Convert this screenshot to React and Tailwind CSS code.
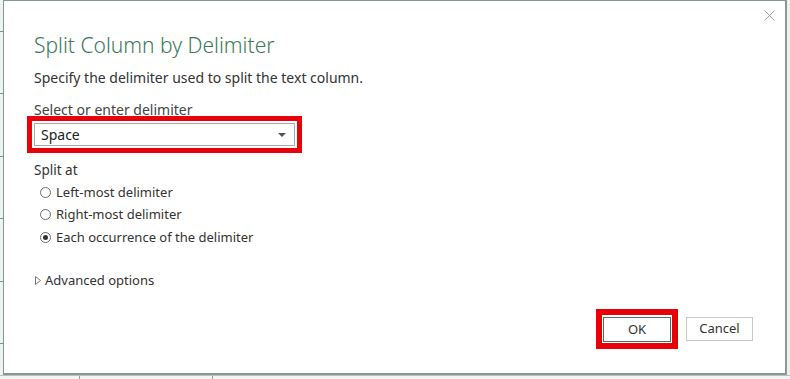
import { X } from 'lucide-react'

function Radio({ checked, label }) {
    return (
        <div className="flex items-center h-[22.5px]">
            <span className="w-[11px] h-[11px] rounded-full border border-[#6b6b6b] bg-white flex items-center justify-center">
                {checked && <span className="w-[5px] h-[5px] rounded-full bg-[#333]" />}
            </span>
            <span className="ml-[5px] text-[13px] text-[#333]">{label}</span>
        </div>
    )
}

export default function App() {
    return (
        <div className="w-[790px] h-[379px] bg-[#f6f8f7] overflow-hidden flex flex-col" style={{ fontFamily: '"Segoe UI", "Noto Sans", sans-serif' }}>
            <div className="flex h-[375px]">
                {/* sheet edge on the left */}
                <div className="w-[3px] flex flex-col justify-around bg-[#f0f3f1]">
                    <span className="h-px bg-[#6f9b85]" />
                    <span className="h-px bg-[#6f9b85]" />
                    <span className="h-px bg-[#6f9b85]" />
                    <span className="h-px bg-[#6f9b85]" />
                    <span className="h-px bg-[#6f9b85]" />
                    <span className="h-px bg-[#6f9b85]" />
                </div>

                {/* dialog */}
                <div className="relative w-[784px] h-full bg-white border border-[#7e9d8f] border-b-2 border-r-2 border-b-[#8a9a92] border-r-[#8a9a92] pl-[30px] flex flex-col">
                    <button className="absolute top-[5px] right-[6px] text-[#8a8a8a]">
                        <X className="w-[19px] h-[19px]" strokeWidth={1} />
                    </button>

                    <h1 className="mt-[29px] text-[21px] leading-[30px] font-light text-[#3c7a5a]">Split Column by Delimiter</h1>
                    <p className="mt-[8px] text-[14px] leading-[20px] text-[#333]">Specify the delimiter used to split the text column.</p>

                    <p className="mt-[14px] text-[14px] leading-[16px] text-[#444]">Select or enter delimiter</p>
                    <div className="-ml-[7px] w-[275px] h-[37px] border-[5px] border-[#e8000b] bg-white p-[2px] -mt-[2px]">
                        <div className="h-full border border-[#a9a9a9] flex items-center justify-between pl-[6px] pr-[8px]">
                            <span className="text-[14px] text-[#222]">Space</span>
                            <svg width="8" height="4" viewBox="0 0 8 4">
                                <path d="M0 0h8L4 4z" fill="#555" />
                            </svg>
                        </div>
                    </div>

                    <p className="mt-[7px] text-[13.5px] leading-[20px] text-[#333]">Split at</p>
                    <div className="ml-[6px] mt-[1px] flex flex-col">
                        <Radio label="Left-most delimiter" />
                        <Radio label="Right-most delimiter" />
                        <Radio checked label="Each occurrence of the delimiter" />
                    </div>

                    <div className="mt-[22px] flex items-center">
                        <svg width="6" height="9" viewBox="0 0 6 9" className="ml-[1px]">
                            <path d="M0.5 0.5L5.5 4.5L0.5 8.5Z" fill="none" stroke="#777" />
                        </svg>
                        <span className="ml-[4px] text-[13px] text-[#333]">Advanced options</span>
                    </div>

                    <div className="mt-auto mb-[24px] mr-[32px] flex justify-end items-center gap-[8px]">
                        <div className="border-[6px] border-[#e8000b] p-[1px]">
                            <button className="w-[68px] h-[25px] border border-[#3c7a5a] bg-white text-[13px] text-[#333]">OK</button>
                        </div>
                        <button className="w-[67px] h-[24px] border border-[#c9c9c9] bg-white text-[13px] text-[#333]">Cancel</button>
                    </div>
                </div>

                <div className="w-[3px] bg-[#eef1ef]" />
            </div>

            {/* sheet row below */}
            <div className="h-[4px] flex bg-[#f4f4f4] border-t border-[#b5c3bc]">
                <div className="w-[80px] border-r border-[#9a9a9a]" />
                <div className="w-[133px] border-r border-[#9a9a9a]" />
                <div className="flex-1" />
            </div>
        </div>
    )
}
